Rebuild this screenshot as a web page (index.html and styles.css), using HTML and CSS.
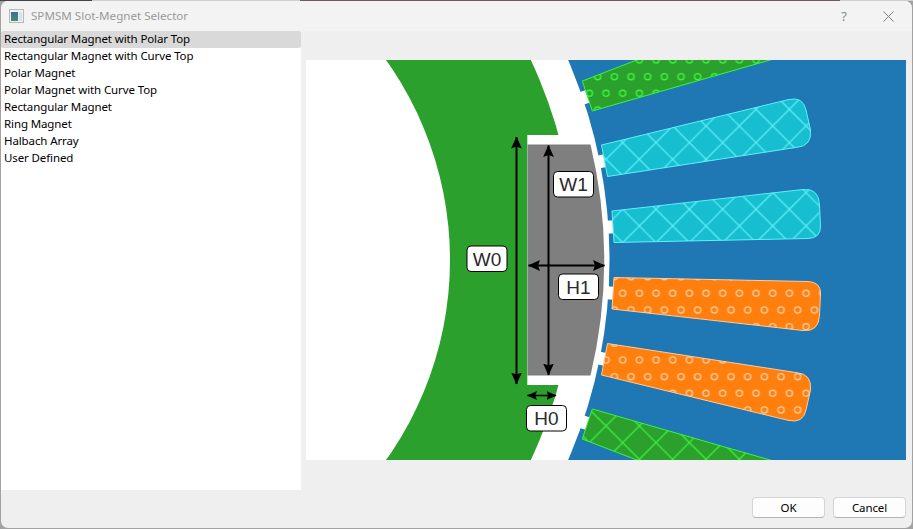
FILE: index.html
```html
<!DOCTYPE html>
<html lang="en">
  <head>
    <meta charset="UTF-8" />
    <title>SPMSM Slot-Megnet Selector</title>
    <link rel="stylesheet" href="styles.css">
  </head>
  <body>
    <div class="window">
      <div class="titlebar">
        <svg class="app-icon" width="15" height="14" viewBox="0 0 15 14">
          <defs>
            <linearGradient id="icon-fill" x1="0" y1="0" x2="0" y2="1">
              <stop offset="0" stop-color="#3b6fa6" />
              <stop offset="1" stop-color="#3f9163" />
            </linearGradient>
          </defs>
          <rect x="0.5" y="0.5" width="14" height="13" fill="#f2f2f2" stroke="#b8b8b8" />
          <rect x="2" y="3" width="7" height="9" fill="url(#icon-fill)" />
          <rect x="10" y="3" width="3" height="9" fill="#d3e4ea" />
        </svg>
        <span class="title">SPMSM Slot-Megnet Selector</span>
        <span class="help">?</span>
        <svg class="close" width="11" height="11" viewBox="0 0 11 11">
          <path d="M0.5 0.5 L10.5 10.5 M10.5 0.5 L0.5 10.5" stroke="#808080" fill="none" />
        </svg>
      </div>

      <div class="content">
        <ul class="magnet-list">
          <li class="selected">Rectangular Magnet with Polar Top</li>
          <li>Rectangular Magnet with Curve Top</li>
          <li>Polar Magnet</li>
          <li>Polar Magnet with Curve Top</li>
          <li>Rectangular Magnet</li>
          <li>Ring Magnet</li>
          <li>Halbach Array</li>
          <li>User Defined</li>
        </ul>

        <div class="preview">
          <svg class="drawing" width="600" height="400" viewBox="306 60 600 400">
            <defs>
              <!-- tiles are 3 periods wide so that they land on whole pixels -->
              <path id="cross-lines" d="M0 0 L100 100 M33.333 0 L100 66.667 M66.667 0 L100 33.333 M0 33.333 L66.667 100 M0 66.667 L33.333 100 M100 0 L0 100 M66.667 0 L0 66.667 M33.333 0 L0 33.333 M100 33.333 L33.333 100 M100 66.667 L66.667 100" fill="none" />
              <g id="dot-pair" fill="none">
                <circle cx="4.17" cy="8.33" r="3.1" />
                <circle cx="12.5" cy="25" r="3.1" />
              </g>
              <g id="dot-row">
                <use href="#dot-pair" x="0" />
                <use href="#dot-pair" x="16.667" />
                <use href="#dot-pair" x="33.333" />
                <use href="#dot-pair" x="50" />
                <use href="#dot-pair" x="66.667" />
                <use href="#dot-pair" x="83.333" />
              </g>
              <g id="dot-block">
                <use href="#dot-row" y="0" />
                <use href="#dot-row" y="33.333" />
                <use href="#dot-row" y="66.667" />
              </g>
              <pattern id="cross-cyan" patternUnits="userSpaceOnUse" x="22.67" y="9.3" width="100" height="100">
                <use href="#cross-lines" stroke="#5ef0fa" stroke-width="1.2" />
              </pattern>
              <pattern id="cross-green" patternUnits="userSpaceOnUse" x="22.67" y="9.3" width="100" height="100">
                <use href="#cross-lines" stroke="#3cf53c" stroke-width="1.2" />
              </pattern>
              <pattern id="dots-green" patternUnits="userSpaceOnUse" x="618.53" y="284.97" width="100" height="100">
                <use href="#dot-block" stroke="#3cf53c" stroke-width="1.3" />
              </pattern>
              <pattern id="dots-orange" patternUnits="userSpaceOnUse" x="618.53" y="284.97" width="100" height="100">
                <use href="#dot-block" stroke="#ffcb9c" stroke-width="1.3" />
              </pattern>
              <marker id="head" viewBox="0 0 12 12" refX="11.5" refY="6" markerWidth="12" markerHeight="12" markerUnits="userSpaceOnUse" orient="auto-start-reverse">
                <path d="M0 0.6 L12 6 L0 11.4 L2 6 Z" fill="#000" />
              </marker>
              <marker id="head-small" viewBox="0 0 10 10" refX="9.5" refY="5" markerWidth="10" markerHeight="10" markerUnits="userSpaceOnUse" orient="auto-start-reverse">
                <path d="M0 0.5 L10 5 L0 9.5 L1.6 5 Z" fill="#000" />
              </marker>
            </defs>

            <!-- stator -->
            <rect x="306" y="60" width="600" height="400" fill="#1f77b4" />
            <circle cx="105.5" cy="260" r="504" fill="#fff" />

            <!-- slot openings -->
            <g fill="#fff">
              <rect x="600" y="253.5" width="15" height="13" transform="rotate(-18.75 105.5 260)" />
              <rect x="600" y="253.5" width="15" height="13" transform="rotate(-11.25 105.5 260)" />
              <rect x="600" y="253.5" width="15" height="13" transform="rotate(-3.75 105.5 260)" />
              <rect x="600" y="253.5" width="15" height="13" transform="rotate(3.75 105.5 260)" />
              <rect x="600" y="253.5" width="15" height="13" transform="rotate(11.25 105.5 260)" />
              <rect x="600" y="253.5" width="15" height="13" transform="rotate(18.75 105.5 260)" />
            </g>

            <!-- winding slots, top to bottom -->
            <g stroke-width="1">
              <path d="M582.3 81 L642 58 L777 58 L592.3 111 Z" fill="#2ca02c" stroke="#3cf53c" />
              <path d="M582.3 81 L642 58 L777 58 L592.3 111 Z" fill="url(#dots-green)" />

              <path d="M601.5 145 L788 99.7 Q803 96 806 110 L810.5 130 Q812 146 797 147.3 L607.5 176.5 Z" fill="#17becf" stroke="#5ef0fa" />
              <path d="M601.5 145 L788 99.7 Q803 96 806 110 L810.5 130 Q812 146 797 147.3 L607.5 176.5 Z" fill="url(#cross-cyan)" />

              <path d="M612 211 L803 189.5 Q819 188 819.5 205 L820.5 226 Q821 238 808 238.5 L614 242.5 Z" fill="#17becf" stroke="#5ef0fa" />
              <path d="M612 211 L803 189.5 Q819 188 819.5 205 L820.5 226 Q821 238 808 238.5 L614 242.5 Z" fill="url(#cross-cyan)" />

              <path d="M612 309 L803 330.5 Q819 332 819.5 315 L820.5 294 Q821 282 808 281.5 L614 277.5 Z" fill="#ff7f0e" stroke="#ffcb9c" />
              <path d="M612 309 L803 330.5 Q819 332 819.5 315 L820.5 294 Q821 282 808 281.5 L614 277.5 Z" fill="url(#dots-orange)" />

              <path d="M601.5 375 L788 420.3 Q803 424 806 410 L810.5 390 Q812 374 797 372.7 L607.5 343.5 Z" fill="#ff7f0e" stroke="#ffcb9c" />
              <path d="M601.5 375 L788 420.3 Q803 424 806 410 L810.5 390 Q812 374 797 372.7 L607.5 343.5 Z" fill="url(#dots-orange)" />

              <path d="M582.3 439 L642 462 L777 462 L592.3 409 Z" fill="#2ca02c" stroke="#3cf53c" />
              <path d="M582.3 439 L642 462 L777 462 L592.3 409 Z" fill="url(#cross-green)" />
            </g>

            <!-- rotor -->
            <circle cx="105.5" cy="260" r="470" fill="#2ca02c" />
            <circle cx="105.5" cy="260" r="344.5" fill="#fff" />

            <!-- magnet -->
            <rect x="527.3" y="135" width="50" height="250" fill="#fff" />
            <path d="M527.5 144.5 L590.5 144.5 A498.5 498.5 0 0 1 590.5 375.5 L527.5 375.5 Z" fill="#7f7f7f" />

            <!-- dimensions -->
            <g fill="none" stroke="#000" stroke-width="2">
              <path d="M516.5 137 L516.5 384" marker-start="url(#head)" marker-end="url(#head)" />
              <path d="M548.5 145.5 L548.5 375" marker-start="url(#head)" marker-end="url(#head)" />
              <path d="M528.5 265.5 L604.5 265.5" marker-start="url(#head)" marker-end="url(#head)" />
              <path d="M527.5 395.5 L556 395.5" stroke-width="1.6" marker-start="url(#head-small)" marker-end="url(#head-small)" />
            </g>

            <g class="dim-label">
              <rect x="467" y="246" width="40" height="25.5" rx="4" />
              <text x="487" y="265.5">W0</text>
              <rect x="553.5" y="171.5" width="40" height="25.5" rx="4" />
              <text x="573.5" y="191">W1</text>
              <rect x="558.5" y="274" width="40" height="25.5" rx="4" />
              <text x="578.5" y="293.5">H1</text>
              <rect x="526.5" y="405.5" width="40" height="25.5" rx="4" />
              <text x="546.5" y="425">H0</text>
            </g>
          </svg>
        </div>
      </div>

      <div class="buttons">
        <button>OK</button>
        <button>Cancel</button>
      </div>
    </div>
  </body>
</html>
```
FILE: styles.css
```css
html, body {
  margin: 0;
  height: 100%;
}
body {
  background:
    linear-gradient(to right, #444 92px, #cfcfcf 92px, #cfcfcf 300px, #6d5a66 300px, #6d5a66 840px, #cfcfcf 840px) top / 100% 1px no-repeat,
    #a2a2a2;
  font-family: "Noto Sans", sans-serif;
  font-size: 11.5px;
  overflow: hidden;
}
.window {
  box-sizing: border-box;
  width: 911px;
  height: 527px;
  margin: 1px 0 0 1px;
  background: #efefef;
  border-radius: 7px;
  overflow: hidden;
}
.titlebar {
  display: flex;
  align-items: center;
  height: 30px;
  padding: 0 18px 0 8px;
  background: #f3f3f3;
}
.app-icon {
  margin-right: 7px;
}
.title {
  flex: 1;
  margin-bottom: 2px;
  color: #999;
  font-size: 11.6px;
}
.help {
  margin-right: 36px;
  color: #888;
  font-size: 13px;
}
.content {
  display: flex;
}
.magnet-list {
  width: 300px;
  height: 459px;
  margin: 0;
  padding: 0;
  background: #fff;
  letter-spacing: -0.115px;
  list-style: none;
}
.magnet-list li {
  height: 17px;
  padding-left: 3px;
  line-height: 16px;
  color: #000;
  white-space: nowrap;
}
.magnet-list .selected {
  background: #d9d9d9;
  border-radius: 2px;
}
.preview {
  padding: 29px 0 0 5px;
}
.drawing {
  display: block;
}
.dim-label rect {
  fill: #fff;
  stroke: #000;
  stroke-width: 1;
}
.dim-label text {
  fill: #2a2a2a;
  font-family: "Liberation Sans", sans-serif;
  font-size: 19px;
  text-anchor: middle;
}
.buttons {
  display: flex;
  justify-content: flex-end;
  gap: 8px;
  padding: 7px 6px 0 0;
}
.buttons button {
  box-sizing: border-box;
  width: 73px;
  height: 21px;
  padding: 0;
  background: #fdfdfd;
  border: 1px solid #d4d4d4;
  border-bottom-color: #b4b4b4;
  border-radius: 4px;
  color: #000;
  font-family: inherit;
  font-size: 11.5px;
  letter-spacing: -0.1px;
}
```
